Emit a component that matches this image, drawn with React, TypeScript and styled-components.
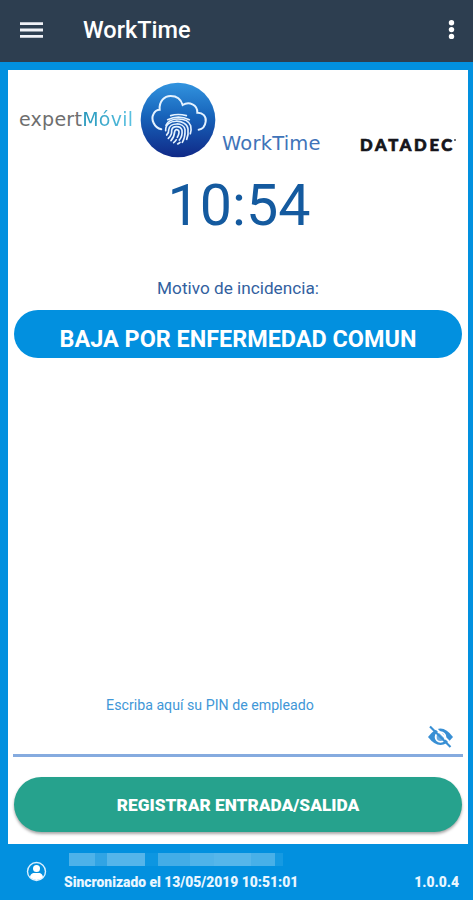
import React from "react";
import styled, { createGlobalStyle } from "styled-components";

const Global = createGlobalStyle`
  * { box-sizing: border-box; }
  body { margin: 0; font-family: Roboto, "Liberation Sans", sans-serif; }
`;

const Screen = styled.div`
  width: 473px;
  height: 900px;
  display: flex;
  flex-direction: column;
  background: #0290df;
  overflow: hidden;
`;

const Toolbar = styled.header`
  height: 62px;
  flex: none;
  display: flex;
  align-items: center;
  padding: 0 16px 2px 20px;
  background: #2d3e50;
`;

const Title = styled.h1`
  margin: 0 auto 0 40px;
  font-size: 23.5px;
  line-height: 30px;
  font-weight: 500;
  color: #fff;
`;

const Card = styled.main`
  margin: 8px 5px 0 8px;
  height: 774px;
  flex: none;
  display: flex;
  flex-direction: column;
  align-items: stretch;
  padding: 0 6px;
  background: #fff;
`;

const Brands = styled.div`
  display: flex;
  height: 100px;
  padding: 12px 0 0 5px;
  align-items: flex-start;
`;

const BrandText = styled.span<{ $top: number; $left?: number; $size: number; $spacing?: number }>`
  font-family: "DejaVu Sans", sans-serif;
  font-size: ${(p) => p.$size}px;
  line-height: 24px;
  letter-spacing: ${(p) => p.$spacing ?? 0}px;
  margin: ${(p) => p.$top}px 0 0 ${(p) => p.$left ?? 0}px;
  color: #3f74b9;
  white-space: nowrap;
`;

const Expert = styled(BrandText)`
  width: 121px;
  color: #6e6e6e;
  b {
    font-weight: 400;
    background: linear-gradient(90deg, #2597bb, #5cc2e2);
    background-clip: text;
    color: transparent;
  }
`;

const Datadec = styled.span`
  display: flex;
  margin: 51px 6px 0 auto;
  font: 900 16.6px/24px Lato, sans-serif;
  letter-spacing: 2.7px;
  color: #15151b;
  -webkit-text-stroke: 0.7px #15151b;
`;

const Mark = styled.i`
  width: 2px;
  height: 2px;
  margin: 6px 0 0 -1px;
  border-radius: 50%;
  background: #44444a;
`;

const Clock = styled.div`
  height: 70px;
  padding: 1px 0 0 2px;
  font-size: 57.4px;
  line-height: 70px;
  text-align: center;
  color: #145a9f;
`;

const Caption = styled.div`
  margin-top: 36px;
  height: 25px;
  font-size: 17.2px;
  line-height: 24px;
  text-align: center;
  color: #32619f;
`;

const Reason = styled.button`
  margin-top: 9px;
  height: 48px;
  border: 0;
  border-radius: 24px;
  padding: 9px 0 0;
  background: #0290df;
  color: #fff;
  font: 700 23.4px/30px Roboto, sans-serif;
  white-space: nowrap;
`;

const PinArea = styled.div`
  margin: auto -1px 0;
  height: 62px;
  display: flex;
  flex-direction: column;
  border-bottom: 3px solid #85abdf;
`;

const PinLabel = styled.label`
  padding-right: 56px;
  font-size: 14.2px;
  line-height: 20px;
  text-align: center;
  color: #4197d7;
`;

const EyeSlot = styled.div`
  display: flex;
  justify-content: flex-end;
  padding: 10px 9px 0 0;
`;

const Register = styled.button`
  margin: 20px 0 12px;
  height: 55px;
  flex: none;
  border: 0;
  border-radius: 28px;
  padding: 1px 0 0;
  background: #26a28d;
  box-shadow: 0 2px 3px rgba(0, 0, 0, 0.35);
  color: #fff;
  font: 900 17.3px/24px Roboto, sans-serif;
`;

const Footer = styled.footer`
  flex: 1;
  display: flex;
  padding: 9px 14px 0 26px;
  color: #e9f6ff;
  font-size: 13.87px;
  font-weight: 900;
  line-height: 18px;
`;

const Avatar = styled.svg`
  margin: 8px 17px 0 0;
  flex: none;
`;

const Sync = styled.div`
  flex: 1;
`;

const Redacted = styled.div`
  display: grid;
  grid-template-columns: 26px 12px 38px 13px 32px 24px 37px 24px 8px;
  height: 20px;
  margin-left: 5px;
`;

const Block = styled.i<{ $tone: string }>`
  height: 13px;
  background: ${(p) => p.$tone};
`;

const Version = styled.div`
  margin-top: 20px;
`;

const tones = ["#4db2e9", "#31a4e4", "#55b5ea", "#0d96e1", "#43ade7", "#50b3e9", "#56b6ea", "#48b0e8", "#169ae2"];

function CloudBadge() {
  return (
    <svg width="76" height="76" viewBox="16 12 228 228" fill="none">
      <defs>
        <linearGradient id="badge" x1="0" y1="0" x2="0" y2="1">
          <stop offset="0" stopColor="#3294df" />
          <stop offset=".45" stopColor="#1763ba" />
          <stop offset="1" stopColor="#102987" />
        </linearGradient>
      </defs>
      <circle cx="130" cy="126" r="112" fill="url(#badge)" />
      <g stroke="#e4f2ff" strokeWidth="6" strokeLinecap="round">
        <path d="M80 154C59 149 47 124 57 107C61 99 68 95 75 95C73 70 89 54 108 54C126 54 139 64 144 81C163 69 189 80 188 104C204 103 216 116 213 131C211 145 203 154 192 155" />
        <g strokeWidth="5">
          <path d="M108 113Q130 106 155 113" />
          <path d="M99 125Q131 110 164 125" />
          <path d="M94 142C104 117 158 116 168 143Q171 156 167 167" />
          <path d="M93 158C90 120 157 122 160 153Q162 170 156 184" />
          <path d="M96 171Q103 165 102 156C104 132 148 132 151 155Q152 178 143 193" />
          <path d="M101 181Q112 171 111 157C113 142 138 142 142 157Q144 174 134 186" />
          <path d="M109 188Q119 177 120 161C122 151 134 155 133 164Q132 172 128 178" />
          <path d="M117 194Q122 190 125 185M129 198Q133 196 136 193" />
        </g>
      </g>
    </svg>
  );
}

export default function App() {
  return (
    <Screen>
      <Global />
      <Toolbar>
        <svg width="23" height="18" viewBox="0 0 23 18" stroke="#f0f1f6" strokeWidth="2.8">
          <path d="M0 2.600H23M0 9H23M0 15.400H23" />
        </svg>
        <Title>WorkTime</Title>
        <svg width="12" height="24" viewBox="0 0 12 24" fill="#fff">
          <circle cx="6.500" cy="4.800" r="2.700" />
          <circle cx="6.500" cy="11.600" r="2.700" />
          <circle cx="6.500" cy="18.400" r="2.700" />
        </svg>
      </Toolbar>
      <Card>
        <Brands>
          <Expert $top={25} $size={19} $spacing={0.25}>expert<b>Móvil</b></Expert>
          <CloudBadge />
          <BrandText $top={50} $left={6} $size={19.5} $spacing={0.2}>WorkTime</BrandText>
          <Datadec>DATADEC<Mark /></Datadec>
        </Brands>
        <Clock>10:54</Clock>
        <Caption>Motivo de incidencia:</Caption>
        <Reason>BAJA POR ENFERMEDAD COMUN</Reason>
        <PinArea>
          <PinLabel>Escriba aquí su PIN de empleado</PinLabel>
          <EyeSlot>
            <svg width="27" height="24" viewBox="0 0 27 24" fill="none">
              <path d="M1 12Q13.500-5 26 12Q13.500 28 1 12Z" fill="#388fd4" />
              <circle cx="13.500" cy="12" r="5.800" fill="#fff" />
              <circle cx="13.500" cy="12" r="3.900" fill="#67a9df" />
              <path d="M5-.5L25.500 20" stroke="#fff" strokeWidth="2" />
              <path d="M3 1.500L23.500 22" stroke="#388fd4" strokeWidth="2.200" />
            </svg>
          </EyeSlot>
        </PinArea>
        <Register>REGISTRAR ENTRADA/SALIDA</Register>
      </Card>
      <Footer>
        <Avatar width="21" height="21" viewBox="0 0 21 21">
          <circle cx="10.500" cy="10.500" r="9" fill="none" stroke="#d9efff" strokeWidth="1.400" />
          <circle cx="10.500" cy="7.400" r="3.500" fill="#fff" />
          <path d="M4 16.300C4.500 11.500 8 12 10.500 12S16.500 11.500 17 16.300Q10.500 21.500 4 16.300Z" fill="#fff" />
        </Avatar>
        <Sync>
          <Redacted>
            {tones.map((tone, i) => (
              <Block key={i} $tone={tone} />
            ))}
          </Redacted>
          Sincronizado el 13/05/2019 10:51:01
        </Sync>
        <Version>1.0.0.4</Version>
      </Footer>
    </Screen>
  );
}
